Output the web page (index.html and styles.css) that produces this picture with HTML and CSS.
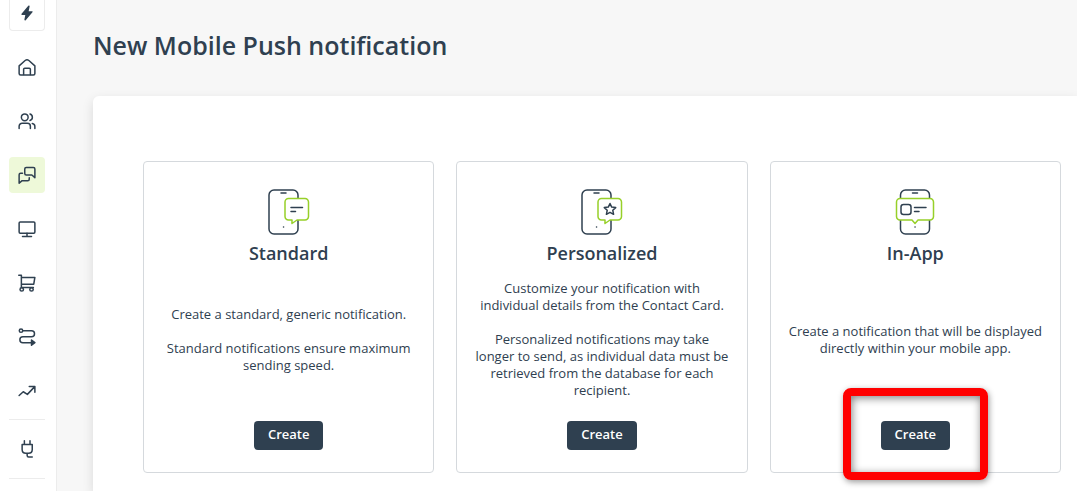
FILE: index.html
```html
<!DOCTYPE html>
<html lang="en">
<head>
  <meta charset="UTF-8">
  <meta name="viewport" content="width=device-width, initial-scale=1">
  <title>New Mobile Push notification</title>
  <link rel="stylesheet" href="styles.css">
</head>
<body>
  <nav class="sidebar" aria-label="Main menu">
    <button class="quick" type="button" aria-label="Quick actions">
      <svg class="bolt" viewBox="0 0 24 24"><path d="M14.500 3 5.500 13.500h5.500L9.500 21l9-10.500H13z"/></svg>
    </button>
    <a class="nav-item" href="#" aria-label="Home">
      <svg viewBox="0 0 24 24"><path d="M1.500 10.500 9.500 3.300q2.500-2 5 0l8 7.200V20.500q0 2-2 2h-17q-2 0-2-2z"/><path d="M7.500 22v-7q0-1.500 1.500-1.500h6q1.500 0 1.500 1.500v7"/></svg>
    </a>
    <a class="nav-item" href="#" aria-label="Contacts">
      <svg viewBox="0 0 24 24"><circle cx="9" cy="7" r="4.500"/><path d="M1.500 22v-3a4 4 0 0 1 4-4h7a4 4 0 0 1 4 4v3M16 2.700a4.500 4.500 0 0 1 0 8.600M19 15.200a4 4 0 0 1 3.500 4V22"/></svg>
    </a>
    <a class="nav-item active" href="#" aria-label="Channels">
      <svg viewBox="0 0 24 24"><path d="M9 8.500V4q0-2 2-2h9.500q2 0 2 2v11.500L18.500 12H11q-2 0-2-2z"/><path d="M6 9.500H3.500q-2 0-2 2V23L5.500 19.500H13q2 0 2-2v-2"/></svg>
    </a>
    <a class="nav-item" href="#" aria-label="Web">
      <svg viewBox="0 0 24 24"><rect x="1.500" y="2.500" width="21" height="15" rx="1.500"/><path d="M12 17.500v4M6 22h12"/></svg>
    </a>
    <a class="nav-item" href="#" aria-label="E-commerce">
      <svg viewBox="0 0 24 24"><path d="M1 1.500h3.500V18M4.500 4.500h18L21 13.500H4.500M4.500 18h16"/><circle cx="5" cy="20.500" r="2.300"/><circle cx="18" cy="20.500" r="2.300"/></svg>
    </a>
    <a class="nav-item" href="#" aria-label="Automation">
      <svg viewBox="0 0 24 24"><circle cx="4" cy="3.500" r="2.300"/><path d="M6.500 3.500H18a3.700 3.700 0 0 1 0 8H6.500a4 4 0 0 0 0 8H18"/><path class="solid" d="m18 16 4.500 3.500L18 23z"/></svg>
    </a>
    <a class="nav-item" href="#" aria-label="Analytics">
      <svg viewBox="0 0 24 24"><path d="m1.500 18 5.500-5 5.500 3.500 9.500-10M15 6h7.500v7.500"/></svg>
    </a>
    <div class="plugins">
      <a class="nav-item" href="#" aria-label="Integrations">
        <svg viewBox="0 0 24 24"><path d="M8.500 1v4.500M16 1v4.500M5.500 6h13.500v6.500q0 5-5 5h-3.500q-5 0-5-5zM12.200 17.500v3q0 2 2 2H19"/></svg>
      </a>
    </div>
  </nav>

  <main class="content">
    <h1>New Mobile Push notification</h1>
    <section class="panel">
      <article class="card">
        <svg class="card-icon" viewBox="0 0 42 46">
          <rect class="dark" x="1" y="1" width="29" height="44" rx="5"/>
          <path class="dark" d="M13 4h5M15.500 38h.1"/>
          <path class="bubble" d="M20.500 9.500h16.500a3.500 3.500 0 0 1 3.500 3.500v14.500a3.500 3.500 0 0 1-3.500 3.500H29l-5 3.500V31H20.500a3.500 3.500 0 0 1-3.500-3.500V13A3.500 3.500 0 0 1 20.500 9.500z"/>
          <path class="dark" d="M23 18.500h11.500M23 22.500h4.500"/>
        </svg>
        <h2>Standard</h2>
        <div class="description">
          <p>Create a standard, generic notification.</p>
          <p>Standard notifications ensure maximum sending speed.</p>
        </div>
        <button class="create" type="button">Create</button>
      </article>

      <article class="card">
        <svg class="card-icon" viewBox="0 0 42 46">
          <rect class="dark" x="1" y="1" width="29" height="44" rx="5"/>
          <path class="dark" d="M13 4h5M15.500 38h.1"/>
          <path class="bubble" d="M20.500 9.500h16.500a3.500 3.500 0 0 1 3.500 3.500v14.500a3.500 3.500 0 0 1-3.500 3.500H29l-5 3.500V31H20.500a3.500 3.500 0 0 1-3.500-3.500V13A3.500 3.500 0 0 1 20.500 9.500z"/>
          <path class="dark" d="m29 14.500 1.700 3.600 4 .5-2.900 2.700.8 4-3.600-2-3.600 2 .8-4-2.900-2.700 4-.5z"/>
        </svg>
        <h2>Personalized</h2>
        <div class="description">
          <p>Customize your notification with individual details from the Contact Card.</p>
          <p>Personalized notifications may take longer to send, as individual data must be retrieved from the database for each recipient.</p>
        </div>
        <button class="create" type="button">Create</button>
      </article>

      <article class="card">
        <svg class="card-icon" viewBox="0 0 42 46">
          <rect class="dark" x="6.500" y="1" width="29" height="44" rx="5"/>
          <path class="dark" d="M18.500 4h5M21 38h.1"/>
          <path class="bubble" d="M6 9.500h30a3.500 3.500 0 0 1 3.500 3.500v14.500A3.500 3.500 0 0 1 36 31H24L21 34.500 18 31H6a3.500 3.500 0 0 1-3.500-3.500V13A3.500 3.500 0 0 1 6 9.500z"/>
          <rect class="dark" x="7" y="15.500" width="10" height="10" rx="2.500"/>
          <path class="dark" d="M20.500 18.500H32M20.500 22.500H25"/>
        </svg>
        <h2>In-App</h2>
        <div class="description">
          <p>Create a notification that will be displayed directly within your mobile app.</p>
        </div>
        <div class="highlight">
          <button class="create" type="button">Create</button>
        </div>
      </article>
    </section>
  </main>
</body>
</html>
```

FILE: styles.css
```css
* { box-sizing: border-box; margin: 0; padding: 0 }
body {
  display: flex;
  min-height: 100vh;
  overflow: hidden;
  background: #f7f7f7;
  color: #2f4050;
  font-family: "Open Sans", "Noto Sans", sans-serif;
  font-size: 13px;
  line-height: 17px;
}

/* Sidebar */
.sidebar {
  flex: none;
  display: flex;
  flex-direction: column;
  align-items: center;
  gap: 18px;
  width: 57px;
  padding: 0 10px 0 8px;
  height: 100vh;
  background: #fff;
  border-right: 1px solid #ececec;
}
.sidebar svg {
  width: 18px;
  height: 18px;
  fill: none;
  stroke: #2f4050;
  stroke-width: 2;
  stroke-linecap: round;
  stroke-linejoin: round;
}
.sidebar .bolt, .sidebar .solid { fill: #2f4050 }
.quick {
  flex: none;
  width: 36px;
  height: 31px;
  padding-bottom: 4px;
  background: #fff;
  border: 1px solid #ececec;
  border-top: 0;
  border-radius: 0 0 4px 4px;
  line-height: 0;
  cursor: pointer;
}
.nav-item {
  flex: none;
  display: flex;
  align-items: center;
  justify-content: center;
  width: 36px;
  height: 36px;
  border-radius: 4px;
}
.nav-item.active { background: #eef9d9 }
.plugins {
  margin-top: -8px;
  padding: 11px 0;
  border-top: 1px solid #ececec;
  border-bottom: 1px solid #ececec;
}

/* Page */
.content {
  flex: 1;
  display: flex;
  flex-direction: column;
  padding: 29px 0 0 36px;
}
h1 {
  margin-bottom: 35px;
  font-size: 25px;
  font-weight: 600;
  line-height: 32px;
}
.panel {
  flex: 1;
  display: grid;
  grid-template-columns: repeat(3, 1fr);
  align-items: start;
  gap: 22px;
  padding: 65px 16px 18px 50px;
  background: #fff;
  border-radius: 6px 0 0 0;
  box-shadow: 0 4px 12px rgba(0,0,0,0.12);
}

/* Notification type cards */
.card {
  display: flex;
  flex-direction: column;
  align-items: center;
  padding: 27px 17px 22px;
  border: 1px solid #d5d9dd;
  border-radius: 4px;
  text-align: center;
}
.card-icon {
  width: 42px;
  height: 46px;
  fill: none;
  stroke-width: 1.5;
  stroke-linecap: round;
  stroke-linejoin: round;
}
.card-icon .dark { stroke: #2f4050 }
.card-icon .bubble { fill: #fff; stroke: #97d029 }
h2 {
  margin: 6px 0 14px;
  font-size: 18px;
  font-weight: 600;
  line-height: 24px;
}
.description {
  display: flex;
  flex-direction: column;
  justify-content: center;
  gap: 17px;
  min-height: 121px;
}
.create {
  height: 29px;
  margin-top: 21px;
  padding: 0 14px 2px;
  background: #2f4050;
  color: #fff;
  border: 0;
  border-radius: 4px;
  font: inherit;
  font-weight: 600;
  cursor: pointer;
}
.create:hover { background: #40566b }

/* Red frame around the button to press */
.highlight { position: relative }
.highlight::after {
  content: "";
  position: absolute;
  inset: -12px -38px -30px;
  border: 8px solid #f00;
  border-radius: 8px;
  box-shadow: 1px 2px 6px rgba(0,0,0,0.4), inset 1px 2px 8px rgba(0,0,0,0.5);
  pointer-events: none;
}
```
